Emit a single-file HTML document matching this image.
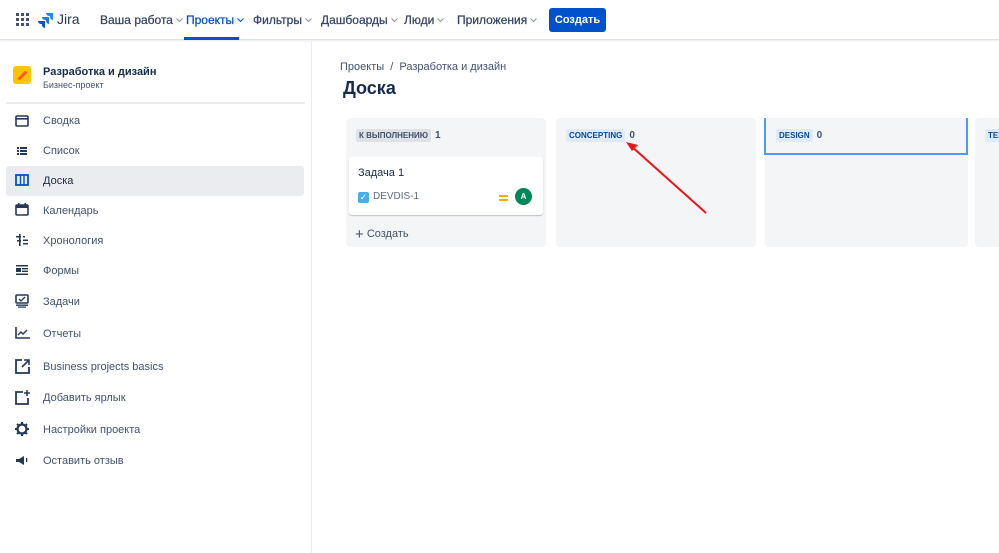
<!DOCTYPE html>
<html><head><meta charset="utf-8"><style>
*{box-sizing:border-box;margin:0;padding:0}
body{width:999px;height:553px;overflow:hidden;background:#fff;font-family:"Liberation Sans","DejaVu Sans",sans-serif;color:#172b4d;position:relative}
.top{position:absolute;left:0;top:0;width:999px;height:40px;border-bottom:1px solid #dfe1e6;box-shadow:0 1px 2px rgba(9,30,66,.08)}
.nav{position:absolute;top:13px;font-size:12px;color:#344563;white-space:nowrap;-webkit-text-stroke:0.25px #344563}
.nav svg{margin-left:3px;vertical-align:1px}
.btn{position:absolute;left:549px;top:8px;width:57px;height:24px;background:#0052cc;color:#fff;border-radius:3px;font-size:11px;font-weight:bold;text-align:center;line-height:24px}
.side{position:absolute;left:0;top:41px;width:312px;height:512px;border-right:1px solid #ebecf0}
.item{position:absolute;left:43px;font-size:11px;color:#42526e}
.ic{position:absolute;left:15px}
.sel{position:absolute;left:6px;top:166px;width:298px;height:30px;background:#ebecf0;border-radius:3px}
.col{position:absolute;top:118px;height:129px;background:#f4f5f7;border-radius:4px}
.hd{position:absolute;top:129px;white-space:nowrap;font-size:0}
.loz{display:inline-block;font-size:8px;font-weight:bold;padding:1px 3px;border-radius:2px;line-height:11px;vertical-align:middle}
.cnt{display:inline-block;font-size:10px;font-weight:bold;line-height:13px;margin-left:4px;vertical-align:middle;color:#42526e}
</style></head><body>
<div class="top">
<svg style="position:absolute;left:16px;top:13px" width="13" height="13" viewBox="0 0 13 13" fill="#42526e"><rect x="0" y="0" width="3" height="3"/><rect x="5" y="0" width="3" height="3"/><rect x="10" y="0" width="3" height="3"/><rect x="0" y="5" width="3" height="3"/><rect x="5" y="5" width="3" height="3"/><rect x="10" y="5" width="3" height="3"/><rect x="0" y="10" width="3" height="3"/><rect x="5" y="10" width="3" height="3"/><rect x="10" y="10" width="3" height="3"/></svg>
<svg style="position:absolute;left:38px;top:12px" width="16" height="16" viewBox="0 0 16 16"><path d="M15 1H8a3 3 0 0 0 3 3h1v1a3 3 0 0 0 3 3z" fill="#2684ff"/><path d="M11 5H4a3 3 0 0 0 3 3h1v1a3 3 0 0 0 3 3z" fill="#1d7afc"/><path d="M7 9H0a3 3 0 0 0 3 3h1v1a3 3 0 0 0 3 3z" fill="#0052cc"/></svg>
<div style="position:absolute;left:57px;top:11px;font-size:14px;color:#253858">Jira</div>
<div class="nav" style="left:100px">Ваша работа<svg width="7" height="5"><path d="M.5 .5l3 3 3-3" stroke="#8993a4" fill="none"/></svg></div>
<div class="nav" style="left:186px;color:#0052cc;-webkit-text-stroke-color:#0052cc">Проекты<svg width="7" height="5"><path d="M.5 .5l3 3 3-3" stroke="#0052cc" fill="none"/></svg></div>
<div style="position:absolute;left:184px;top:37px;width:55px;height:3px;background:#0052cc"></div>
<div class="nav" style="left:253px">Фильтры<svg width="7" height="5"><path d="M.5 .5l3 3 3-3" stroke="#8993a4" fill="none"/></svg></div>
<div class="nav" style="left:321px">Дашбоарды<svg width="7" height="5"><path d="M.5 .5l3 3 3-3" stroke="#8993a4" fill="none"/></svg></div>
<div class="nav" style="left:404px">Люди<svg width="7" height="5"><path d="M.5 .5l3 3 3-3" stroke="#8993a4" fill="none"/></svg></div>
<div class="nav" style="left:457px">Приложения<svg width="7" height="5"><path d="M.5 .5l3 3 3-3" stroke="#8993a4" fill="none"/></svg></div>
<div class="btn">Создать</div>
</div>
<div class="side">
<div style="position:absolute;left:13px;top:25px;width:18px;height:18px;background:#ffc400;border-radius:3px"><div style="position:absolute;left:4px;top:8px;width:11px;height:3px;background:#ff5630;transform:rotate(-45deg)"></div></div>
<div style="position:absolute;left:43px;top:25px;font-size:11px;font-weight:bold;color:#172b4d">Разработка и дизайн</div>
<div style="position:absolute;left:43px;top:39px;font-size:9px;color:#42526e">Бизнес-проект</div>
<div style="position:absolute;left:6px;top:61px;width:299px;height:2px;background:#ebecf0"></div>
</div>
<div class="sel"></div>
<svg class="ic" style="top:115px" width="14" height="12"><rect x="1" y="1" width="12" height="10" rx="1" fill="none" stroke="#253858" stroke-width="1.6"/><rect x="1" y="3" width="12" height="1.6" fill="#253858"/></svg>
<div class="item" style="top:115px">Сводка</div>
<svg class="ic" style="top:145px" width="14" height="12" fill="#253858"><rect x="2" y="2" width="2" height="2"/><rect x="2" y="5" width="2" height="2"/><rect x="2" y="8" width="2" height="2"/><rect x="5" y="2" width="7" height="2"/><rect x="5" y="5" width="7" height="2"/><rect x="5" y="8" width="7" height="2"/></svg>
<div class="item" style="top:145px">Список</div>
<svg class="ic" style="top:174px" width="14" height="12"><rect x="1" y="1" width="12" height="10" fill="none" stroke="#0052cc" stroke-width="1.8"/><rect x="4.8" y="1" width="1.4" height="10" fill="#0052cc"/><rect x="8.3" y="1" width="1.4" height="10" fill="#0052cc"/></svg>
<div class="item" style="top:175px;color:#172b4d">Доска</div>
<svg class="ic" style="top:203px" width="14" height="13"><rect x="1" y="2" width="12" height="10" rx="1" fill="none" stroke="#253858" stroke-width="1.6"/><rect x="1" y="2" width="12" height="3" fill="#253858"/><rect x="3" y="0" width="1.5" height="3" fill="#253858"/><rect x="9.5" y="0" width="1.5" height="3" fill="#253858"/></svg>
<div class="item" style="top:205px">Календарь</div>
<svg class="ic" style="top:234px" width="14" height="12" fill="#253858"><rect x="4" y="0" width="1.6" height="12"/><rect x="1" y="2" width="5" height="1.5"/><rect x="2" y="6" width="4" height="1.5"/><rect x="8" y="2" width="2" height="1.5"/><rect x="8" y="5.5" width="5" height="1.5"/><rect x="8" y="9" width="5" height="1.5"/></svg>
<div class="item" style="top:235px">Хронология</div>
<svg class="ic" style="top:264px" width="14" height="12" fill="#253858"><rect x="1" y="1" width="12" height="1.5"/><rect x="1" y="4" width="5" height="4"/><rect x="7" y="4" width="6" height="1.4"/><rect x="7" y="6.6" width="6" height="1.4"/><rect x="1" y="9.5" width="12" height="1.5"/></svg>
<div class="item" style="top:265px">Формы</div>
<svg class="ic" style="top:294px" width="14" height="14"><rect x="1" y="1" width="12" height="8" rx="1" fill="none" stroke="#253858" stroke-width="1.6"/><path d="M4 5l2 2 4-4" stroke="#253858" stroke-width="1.3" fill="none"/><rect x="1" y="10.5" width="12" height="1.4" fill="#253858"/><rect x="3" y="12.5" width="8" height="1.2" fill="#253858"/></svg>
<div class="item" style="top:296px">Задачи</div>
<svg class="ic" style="top:327px" width="15" height="12"><path d="M1 0v11h14" stroke="#253858" stroke-width="1.6" fill="none"/><path d="M3 8l3-3 2 2 4-4" stroke="#253858" stroke-width="1.4" fill="none"/></svg>
<div class="item" style="top:328px">Отчеты</div>
<svg class="ic" style="top:359px" width="15" height="15"><path d="M7 1H1v13h13V8" stroke="#253858" stroke-width="1.8" fill="none"/><path d="M7 8l6-6M9 1h5v5" stroke="#253858" stroke-width="1.6" fill="none"/></svg>
<div class="item" style="top:361px">Business projects basics</div>
<svg class="ic" style="top:390px" width="15" height="15"><path d="M8 2H1v12h12V8" stroke="#253858" stroke-width="1.8" fill="none"/><path d="M12 0v6M9 3h6" stroke="#253858" stroke-width="1.5"/></svg>
<div class="item" style="top:392px">Добавить ярлык</div>
<svg class="ic" style="top:422px" width="14" height="14"><circle cx="7" cy="7" r="4.5" fill="none" stroke="#253858" stroke-width="2.2"/><path d="M7 0v3M7 11v3M0 7h3M11 7h3M2 2l2 2M10 10l2 2M12 2l-2 2M2 12l2-2" stroke="#253858" stroke-width="2"/></svg>
<div class="item" style="top:424px">Настройки проекта</div>
<svg class="ic" style="top:455px" width="14" height="11" fill="#253858"><path d="M1 4h3l5-3v9L4 7H1z"/><rect x="11" y="3" width="1.3" height="4"/></svg>
<div class="item" style="top:455px">Оставить отзыв</div>

<div style="position:absolute;left:340px;top:61px;font-size:11px;color:#42526e">Проекты &nbsp;/&nbsp; Разработка и дизайн</div>
<div style="position:absolute;left:343px;top:78px;font-size:18px;font-weight:bold;color:#172b4d">Доска</div>

<div class="col" style="left:346px;width:200px"></div>
<div class="hd" style="left:356px"><span class="loz" style="background:#dfe1e6;color:#42526e">К ВЫПОЛНЕНИЮ</span><span class="cnt">1</span></div>
<div style="position:absolute;left:349px;top:157px;width:194px;height:58px;background:#fff;border-radius:3px;box-shadow:0 1px 1px rgba(9,30,66,.25)"></div>
<div style="position:absolute;left:358px;top:167px;font-size:11px;color:#172b4d">Задача 1</div>
<div style="position:absolute;left:358px;top:192px;width:11px;height:11px;background:#4bade8;border-radius:2px;color:#fff;font-size:9px;line-height:11px;text-align:center">✓</div>
<div style="position:absolute;left:373px;top:191px;font-size:10px;color:#5e6c84">DEVDIS-1</div>
<div style="position:absolute;left:499px;top:195px;width:9px;height:2px;background:#ffab00"></div>
<div style="position:absolute;left:499px;top:199px;width:9px;height:2px;background:#ffab00"></div>
<div style="position:absolute;left:515px;top:188px;width:17px;height:17px;border-radius:50%;background:#00875a;color:#fff;font-size:8px;font-weight:bold;text-align:center;line-height:17px">A</div>
<div style="position:absolute;left:355px;top:226px;font-size:11px;color:#42526e"><span style="font-size:15px;vertical-align:-2px">+</span> Создать</div>

<div class="col" style="left:556px;width:200px"></div>
<div class="hd" style="left:566px"><span class="loz" style="background:#deebff;color:#0747a6">CONCEPTING</span><span class="cnt">0</span></div>

<div class="col" style="left:765px;width:203px"></div>
<div style="position:absolute;left:764px;top:118px;width:204px;height:37px;border:2px solid #4c9aff;border-top:none"></div>
<div class="hd" style="left:776px"><span class="loz" style="background:#deebff;color:#0747a6">DESIGN</span><span class="cnt">0</span></div>

<div class="col" style="left:975px;width:40px"></div>
<div class="hd" style="left:985px"><span class="loz" style="background:#deebff;color:#0747a6">TEST</span></div>

<svg style="position:absolute;left:620px;top:138px" width="95" height="80"><path d="M86 75L10 7" stroke="#e8171b" stroke-width="2"/><path d="M6 4l12 3-6 6z" fill="#e8171b"/></svg>
</body></html>
